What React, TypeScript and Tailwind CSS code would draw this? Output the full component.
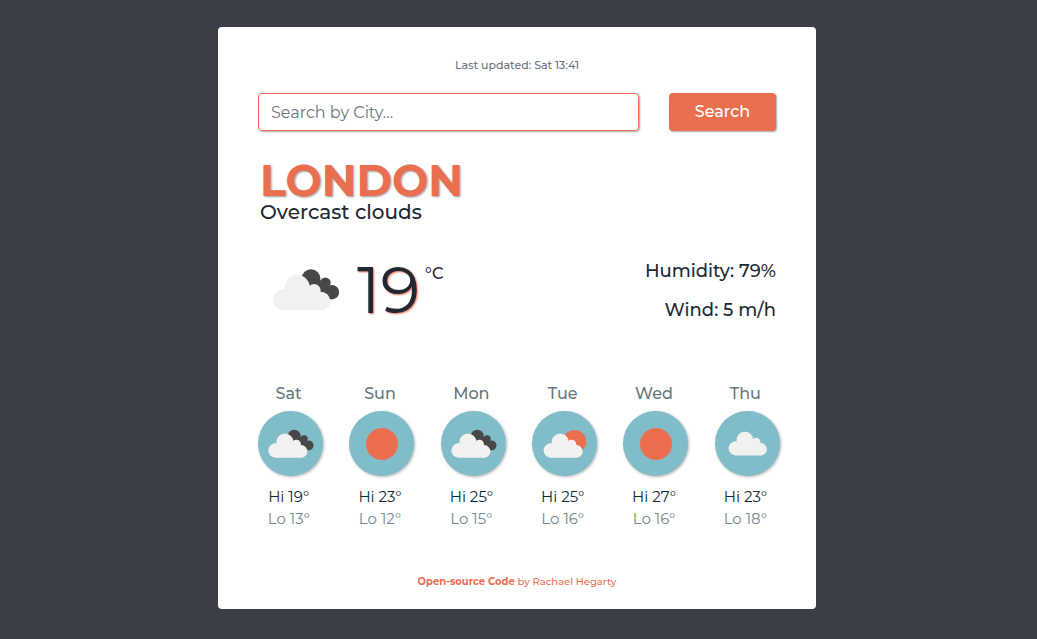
type Sky = "clear" | "partly" | "cloudy" | "overcast";

type Day = { name: string; sky: Sky; high: number; low: number };

const days: Day[] = [
  { name: "Sat", sky: "overcast", high: 19, low: 13 },
  { name: "Sun", sky: "clear", high: 23, low: 12 },
  { name: "Mon", sky: "overcast", high: 25, low: 15 },
  { name: "Tue", sky: "partly", high: 25, low: 16 },
  { name: "Wed", sky: "clear", high: 27, low: 16 },
  { name: "Thu", sky: "cloudy", high: 23, low: 18 },
];

function Cloud() {
  return (
    <g fill="#f1f1f0">
      <circle cx="10.5" cy="30.7" r="10.5" />
      <circle cx="24.3" cy="18.5" r="12.5" />
      <circle cx="41" cy="21.7" r="6.7" />
      <circle cx="48" cy="32" r="9.2" />
      <path d="M10.5 41.2V25L24 18H40L48 26V41.2Z" />
    </g>
  );
}

function DarkCloud() {
  return (
    <g fill="#484848">
      <circle cx="38" cy="9.6" r="9.4" />
      <circle cx="52.3" cy="13.9" r="5.4" />
      <circle cx="58.8" cy="23.2" r="7.3" />
      <path d="M38 10L52 12L58 20L56 30L44 27L34 18Z" />
    </g>
  );
}

function DayIcon({ sky }: { sky: Sky }) {
  return (
    <svg viewBox="0 0 65 65" className="size-full" aria-hidden="true">
      {sky === "clear" && <circle cx="33" cy="33" r="16" fill="#eb6e4f" />}
      {sky === "partly" && (
        <>
          <circle cx="42.7" cy="30.5" r="11.5" fill="#eb6e4f" />
          <g transform="translate(11.6 18.5) scale(.684)">
            <Cloud />
          </g>
        </>
      )}
      {sky === "overcast" && (
        <g transform="translate(10.3 18.5) scale(.684)">
          <DarkCloud />
          <Cloud />
        </g>
      )}
      {sky === "cloudy" && (
        <g transform="translate(13.6 16.8) scale(.67)">
          <Cloud />
        </g>
      )}
    </svg>
  );
}

export default function App() {
  return (
    <div className="min-h-screen bg-[#3b3e47] py-[27px] pr-[3px] font-['Montserrat','Inter',sans-serif] text-[#212832]">
      <main className="mx-auto max-w-[598px] rounded bg-white px-10 pt-[30px] pb-[19px]">
        <p className="text-center text-[11px] leading-4 font-medium text-[#6c757d]">
          Last updated: Sat 13:41
        </p>

        <form
          className="mt-5 grid grid-cols-[381fr_107fr] gap-[30px]"
          onSubmit={(event) => event.preventDefault()}
        >
          <input
            type="search"
            aria-label="Search by City"
            placeholder="Search by City..."
            className="h-[38px] min-w-0 rounded border border-[#ea6e50] px-3 text-base shadow-[1px_1px_2px_rgba(0,0,0,0.35)] outline-none placeholder:text-[#6c757d]"
          />
          <button
            type="submit"
            className="h-[38px] rounded bg-[#ea6e50] text-base font-medium text-white shadow-[1px_1px_2px_rgba(0,0,0,0.35)]"
          >
            Search
          </button>
        </form>

        <section className="mt-7 pl-0.5">
          <h1 className="text-[43px] leading-[44px] font-bold text-[#ea6e50] uppercase [text-shadow:1px_1px_2px_rgba(0,0,0,0.4)]">
            London
          </h1>
          <h2 className="text-xl leading-[18px] font-medium">Overcast clouds</h2>
        </section>

        <section className="mt-[27px] flex justify-between">
          <div className="flex pl-[15px]">
            <svg viewBox="0 0 66 42" className="mt-[21px] h-[42px] w-[66px]" aria-hidden="true">
              <DarkCloud />
              <Cloud />
            </svg>
            <strong className="ml-[18px] text-[65px] leading-[84px] font-normal [text-shadow:1px_1px_2px_#ea6e50]">
              19
            </strong>
            <span className="mt-3.5 ml-[5px] text-base leading-6 font-medium">°C</span>
          </div>
          <ul className="pt-1 text-right text-lg leading-[39px] font-medium">
            <li>Humidity: 79%</li>
            <li>Wind: 5 m/h</li>
          </ul>
        </section>

        <section className="-mx-[15px] mt-[50px] grid grid-cols-6">
          {days.map((day) => (
            <article key={day.name} className="px-[15px] text-center">
              <h3 className="text-base leading-6 font-medium text-[#64797c]">{day.name}</h3>
              <div className="mt-[5px] size-[65px] rounded-full bg-[#81bdc9] shadow-[1px_1px_3px_rgba(0,0,0,0.3)]">
                <DayIcon sky={day.sky} />
              </div>
              <p className="mt-2.5 text-[15px] leading-[22px] whitespace-nowrap text-[#0b2a33]">
                Hi {day.high}°
              </p>
              <p className="text-[15px] leading-[22px] whitespace-nowrap text-[#72878a]">
                Lo {day.low}°
              </p>
            </article>
          ))}
        </section>

        <footer className="mt-11 text-center text-[10px] leading-4 font-medium text-[#ea6e50]">
          <a href="#source" className="font-bold">
            Open-source Code
          </a>{" "}
          by Rachael Hegarty
        </footer>
      </main>
    </div>
  );
}
